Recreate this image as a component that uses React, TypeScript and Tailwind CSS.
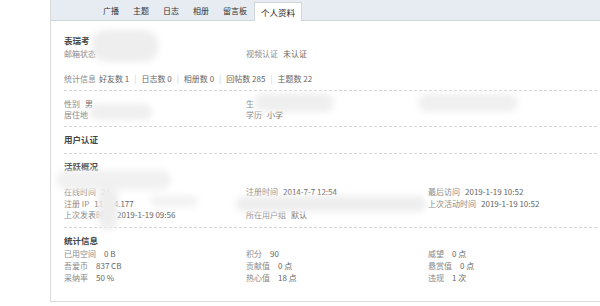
import React from "react";

const tabs = ["广播", "主题", "日志", "相册", "留言板", "个人资料"];

function Item({ label, value, gap = "ml-[5px]" }: { label: string; value?: string; gap?: string }) {
  return (
    <div className="whitespace-nowrap">
      <span className="text-[#8a8a8a]">{label}</span>
      {value && <span className={`${gap} text-[#666]`}>{value}</span>}
    </div>
  );
}

function Divider({ className = "" }: { className?: string }) {
  return <div className={`h-0 border-t border-dashed border-[#d6d6d6] ${className}`} />;
}

function Heading({ children, className = "" }: { children: React.ReactNode; className?: string }) {
  return <div className={`font-bold text-[#444] text-[8.5px] leading-[12px] ${className}`}>{children}</div>;
}

const stats = [
  ["好友数", "1"],
  ["日志数", "0"],
  ["相册数", "0"],
  ["回帖数", "285"],
  ["主题数", "22"],
];

export default function App() {
  return (
    <div
      className="relative w-[600px] h-[306px] bg-white overflow-hidden text-[8px]"
      style={{ fontFamily: '"Noto Sans CJK SC", "Noto Sans", sans-serif' }}
    >
      <div className="ml-[50px] w-[560px] h-[302px] border-l border-b border-[#d9d9d9] flex flex-col">
        {/* tab bar */}
        <div className="h-[21px] bg-[#e6ecf1] border-b border-[#cfd6dc] flex items-end pl-[45px]">
          {tabs.map((t, i) =>
            i === tabs.length - 1 ? (
              <div
                key={t}
                className="h-[19px] -mb-px bg-white border border-b-0 border-[#cfd6dc] px-[6px] flex items-center text-[#222] text-[8.5px]"
              >
                {t}
              </div>
            ) : (
              <div key={t} className="h-[18px] px-[7px] flex items-center text-[#333] text-[8px]">
                {t}
              </div>
            )
          )}
        </div>

        <div className="px-[13px] pt-[12px]">
          <Heading className="leading-[14px]">表瑞考</Heading>
          <div className="grid grid-cols-[182px_182px_182px] leading-[14px]">
            <Item label="邮箱状态" />
            <Item label="视频认证" value="未认证" />
          </div>

          <div className="mt-[12px] leading-[12px] flex items-center whitespace-nowrap">
            <span className="text-[#8a8a8a]">统计信息</span>
            {stats.map(([l, v], i) => (
              <React.Fragment key={l}>
                {i > 0 && <span className="mx-[5px] text-[#ccc]">|</span>}
                <span className={`${i === 0 ? "ml-[3px]" : ""} text-[#666]`}>
                  {l} {v}
                </span>
              </React.Fragment>
            ))}
          </div>

          <Divider className="mt-[5px]" />

          <div className="mt-[7px] grid grid-cols-[182px_182px_182px] leading-[11px]">
            <Item label="性别" value="男" />
            <Item label="生" />
            <div />
            <Item label="居住地" />
            <Item label="学历" value="小学" />
          </div>

          <Divider className="mt-[6px]" />
          <Heading className="mt-[6px]">用户认证</Heading>
          <Divider className="mt-[8px]" />
          <Heading className="mt-[6px]">活跃概况</Heading>

          <div className="mt-[14px] grid grid-cols-[182px_182px_182px] leading-[11.5px]">
            <Item label="在线时间" value="24" />
            <Item label="注册时间" value="2014-7-7 12:54" />
            <Item label="最后访问" value="2019-1-19 10:52" />
            <Item label="注册 IP" value="112.  .4.177" />
            <div />
            <Item label="上次活动时间" value="2019-1-19 10:52" />
            <Item label="上次发表时间" value="2019-1-19 09:56" />
            <Item label="所在用户组" value="默认" />
          </div>

          <Divider className="mt-[6px]" />
          <Heading className="mt-[6px]">统计信息</Heading>

          <div className="mt-[2px] grid grid-cols-[182px_182px_182px] leading-[12px]">
            <Item label="已用空间" value="0 B" gap="ml-[8px]" />
            <Item label="积分" value="90" gap="ml-[8px]" />
            <Item label="威望" value="0 点" gap="ml-[8px]" />
            <Item label="吾爱币" value="837 CB" gap="ml-[8px]" />
            <Item label="贡献值" value="0 点" gap="ml-[8px]" />
            <Item label="悬赏值" value="0 点" gap="ml-[8px]" />
            <Item label="采纳率" value="50 %" gap="ml-[8px]" />
            <Item label="热心值" value="18 点" gap="ml-[8px]" />
            <Item label="违规" value="1 次" gap="ml-[8px]" />
          </div>
        </div>
      </div>

      {/* censor smudges */}
      <div className="absolute left-[92px] top-[30px] w-[66px] h-[32px] rounded-[14px] bg-[#eeeeee] blur-[3px]" />
      <div className="absolute left-[90px] top-[104px] w-[62px] h-[16px] rounded-full bg-[#efefef] blur-[3px]" />
      <div className="absolute left-[254px] top-[93px] w-[80px] h-[19px] rounded-full bg-[#efefef] blur-[3px]" />
      <div className="absolute left-[418px] top-[94px] w-[100px] h-[18px] rounded-full bg-[#f0f0f0] blur-[3px]" />
      <div className="absolute left-[56px] top-[170px] w-[115px] h-[20px] rounded-full bg-[#f1f1f1] blur-[3px]" />
      <div className="absolute left-[98px] top-[185px] w-[20px] h-[45px] rounded-full bg-[#eeeeee] blur-[3px]" />
      <div className="absolute left-[150px] top-[195px] w-[48px] h-[12px] rounded-full bg-[#f3f3f3] blur-[3px]" />
      <div className="absolute left-[236px] top-[196px] w-[190px] h-[16px] rounded-full bg-[#eeeeee] blur-[3px]" />
    </div>
  );
}
